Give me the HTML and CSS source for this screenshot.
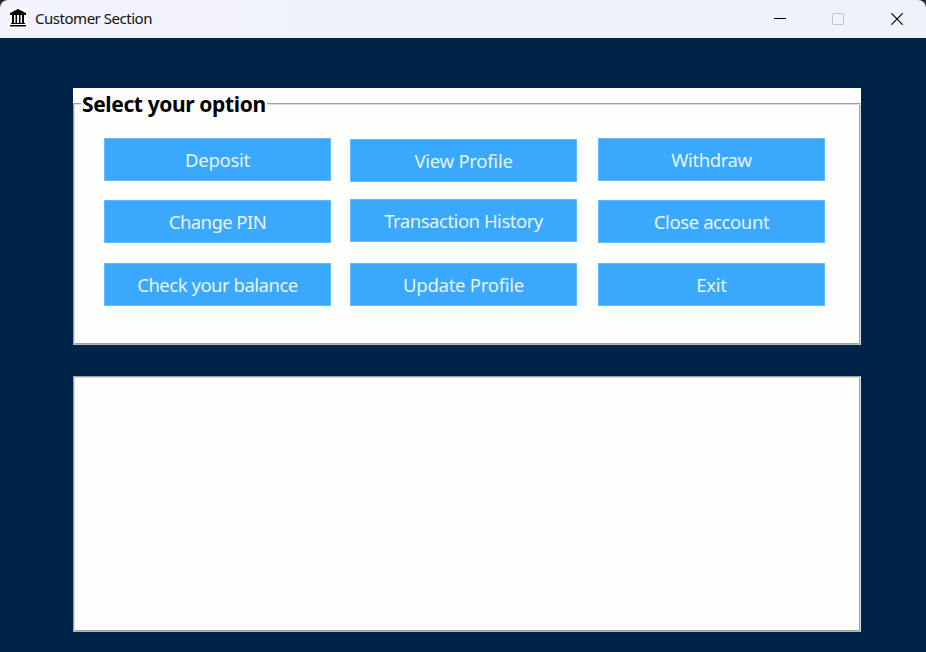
FILE: index.html
```html
<!DOCTYPE html>
<html lang="en">
<head>
<meta charset="utf-8">
<title>Customer Section</title>
<link rel="stylesheet" href="styles.css">
</head>
<body>
<div class="window">
  <header class="titlebar">
    <svg class="app-icon" width="20" height="20" viewBox="0 0 20 20">
      <path fill="#fff" d="M0 0h20v20H0z"/>
      <path d="M10 1 18 5v2H2V5zM4 7h2v9H4zM7.5 7h1.5v9H7.5zM11 7h1.5v9H11zM14 7h2v9h-2zM3 15h14v1H3zM2 17h16v1.5H2z"/>
    </svg>
    <h1 class="title">Customer Section</h1>
    <div class="controls">
      <svg width="12" height="12" viewBox="0 0 12 12"><path d="M0 5.5h12" stroke="#000"/></svg>
      <svg width="12" height="12" viewBox="0 0 12 12"><rect x=".5" y=".5" width="11" height="11" rx="1" fill="none" stroke="#bfc2c8"/></svg>
      <svg width="12" height="12" viewBox="0 0 12 12"><path d="M.3.3l11.4 11.4M11.7.3.3 11.7" stroke="#000" stroke-width="1.2"/></svg>
    </div>
  </header>
  <main class="content">
    <section class="options">
      <div class="group">
        <h2 class="legend"><span>Select your option</span></h2>
        <div class="columns">
          <div class="column">
            <button class="deposit">Deposit</button>
            <button class="pin">Change PIN</button>
            <button class="balance">Check your balance</button>
          </div>
          <div class="column middle">
            <button class="view">View Profile</button>
            <button class="history">Transaction History</button>
            <button class="update">Update Profile</button>
          </div>
          <div class="column">
            <button class="withdraw">Withdraw</button>
            <button class="close">Close account</button>
            <button class="exit">Exit</button>
          </div>
        </div>
      </div>
    </section>
    <section class="output"></section>
  </main>
</div>
</body>
</html>
```
FILE: styles.css
```css
* { box-sizing: border-box; }
body {
  margin: 0;
  background: #2b2b2b;
  font-family: "Noto Sans", "Open Sans", sans-serif;
}
.window {
  width: 926px;
  height: 652px;
  background: #002448;
  border-radius: 8px 8px 0 0;
  overflow: hidden;
}
.titlebar {
  display: flex;
  align-items: center;
  height: 38px;
  padding: 0 23px 0 8px;
  background: linear-gradient(90deg, #f1f2fa 0, #f1f2fa 220px, #eff3f9 300px);
}
.app-icon { margin-top: -2px; }
.title {
  margin: -2px 0 0 7px;
  font-size: 15px;
  letter-spacing: -.47px;
  font-weight: 400;
  line-height: 20px;
  color: #111;
  white-space: nowrap;
}
.controls {
  display: flex;
  gap: 46px;
  margin-left: auto;
}
.controls svg { display: block; }
.controls svg:last-child { margin-left: 1px; }
.content { padding: 50px 65px 0 73px; }
.options {
  height: 257px;
  padding-top: 15px;
  background: #fefefd;
}
.group, .output {
  border: 1px solid #a0a0a0;
  border-right-color: #d8dadb;
  border-bottom-color: #b0b8c0;
  box-shadow: inset 1px 1px #dcdcdc, inset -1px -1px #a0a0a0;
  background: #fefefd;
}
.group { height: 242px; }
.legend {
  height: 34px;
  margin: 0;
  padding-left: 7px;
  font-size: 21px;
  letter-spacing: -.38px;
  line-height: 28px;
  color: #000;
  white-space: nowrap;
}
.legend span {
  display: block;
  width: 186px;
  height: 28px;
  padding-left: 1px;
  background: #fefefd;
  position: relative;
  top: -14px;
}
.columns {
  display: flex;
  gap: 20px;
  padding-left: 30px;
}
.column {
  display: grid;
  align-content: start;
  grid-template-rows: 62px 63px 43px;
  width: 227px;
}
.middle {
  grid-template-rows: 60px 64px 43px;
  margin: 0 1px 0 -1px;
  padding-top: 1px;
}
button {
  height: 43px;
  padding: 1px 0 0;
  border: 1px solid #62bbff;
  background: #3aa8fd;
  color: #e6f4ff;
  font: 400 18.5px/26px "Noto Sans", "Open Sans", sans-serif;
  letter-spacing: -.4px;
  white-space: nowrap;
}
.deposit, .exit { letter-spacing: -.25px; }
.view, .update { letter-spacing: -.26px; }
.pin { letter-spacing: -.57px; }
.balance, .history { letter-spacing: -.48px; }
.output {
  height: 256px;
  margin-top: 31px;
}
```
